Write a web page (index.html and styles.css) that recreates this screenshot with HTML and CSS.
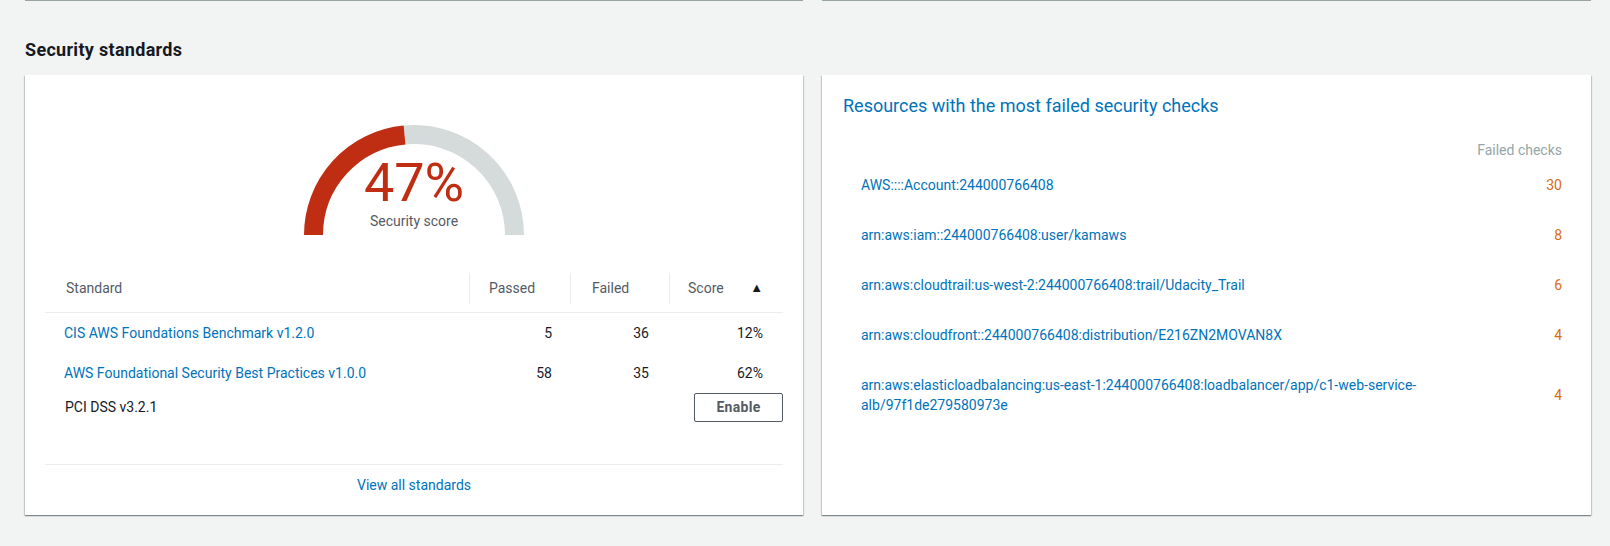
FILE: index.html
```html
<!DOCTYPE html>
<html lang="en">
<head>
<meta charset="utf-8">
<title>Security standards</title>
<link rel="stylesheet" href="styles.css">
</head>
<body>
<div class="page">
  <div class="top-row">
    <div class="top-card"></div>
    <div class="top-card"></div>
  </div>

  <h2 class="section-title">Security standards</h2>

  <div class="cards">
    <div class="card card-standards">
      <div class="gauge">
        <svg class="gauge-svg" width="220" height="110" viewBox="0 0 220 110">
          <path d="M 100.54 9.95 A 100.5 100.5 0 0 1 210.5 110" fill="none" stroke="#d5dbdb" stroke-width="19"/>
          <path d="M 9.5 110 A 100.5 100.5 0 0 1 100.54 9.95" fill="none" stroke="#bf2d13" stroke-width="19"/>
        </svg>
        <div class="gauge-label">
          <div class="gauge-value">47%</div>
          <div class="gauge-caption">Security score</div>
        </div>
      </div>

      <table class="std-table">
        <thead>
          <tr>
            <th class="col-name">Standard</th>
            <th class="col-num sep">Passed</th>
            <th class="col-num sep">Failed</th>
            <th class="col-score sep"><span>Score</span><span class="sort">&#9650;</span></th>
          </tr>
        </thead>
        <tbody>
          <tr class="row-first">
            <td><a href="#" class="link">CIS AWS Foundations Benchmark v1.2.0</a></td>
            <td class="num num-passed">5</td>
            <td class="num">36</td>
            <td class="num">12%</td>
          </tr>
          <tr>
            <td><a href="#" class="link">AWS Foundational Security Best Practices v1.0.0</a></td>
            <td class="num num-passed">58</td>
            <td class="num">35</td>
            <td class="num">62%</td>
          </tr>
          <tr class="row-enable">
            <td class="plain">PCI DSS v3.2.1</td>
            <td></td>
            <td></td>
            <td class="num"><button class="btn">Enable</button></td>
          </tr>
        </tbody>
      </table>

      <div class="card-footer">
        <a href="#" class="link">View all standards</a>
      </div>
    </div>

    <div class="card card-resources">
      <h3 class="res-title">Resources with the most failed security checks</h3>
      <div class="res-head">Failed checks</div>
      <ul class="res-list">
        <li class="res-row"><a href="#" class="link res-name">AWS::::Account:244000766408</a><span class="res-count">30</span></li>
        <li class="res-row"><a href="#" class="link res-name">arn:aws:iam::244000766408:user/kamaws</a><span class="res-count">8</span></li>
        <li class="res-row"><a href="#" class="link res-name">arn:aws:cloudtrail:us-west-2:244000766408:trail/Udacity_Trail</a><span class="res-count">6</span></li>
        <li class="res-row"><a href="#" class="link res-name">arn:aws:cloudfront::244000766408:distribution/E216ZN2MOVAN8X</a><span class="res-count">4</span></li>
        <li class="res-row"><a href="#" class="link res-name">arn:aws:elasticloadbalancing:us-east-1:244000766408:loadbalancer/app/c1-web-service-alb/97f1de279580973e</a><span class="res-count">4</span></li>
      </ul>
    </div>
  </div>
</div>
</body>
</html>
```

FILE: styles.css
```css
* {
  box-sizing: border-box;
}

html, body {
  margin: 0;
  padding: 0;
}

body {
  background: #f2f3f3;
  font-family: Roboto, "Liberation Sans", Arial, sans-serif;
  font-size: 14px;
  color: #16191f;
}

.page {
  width: 1610px;
  height: 546px;
  padding: 0 19px 0 25px;
}

.top-row,
.cards {
  display: grid;
  grid-template-columns: 778fr 769fr;
  column-gap: 19px;
}

.top-card {
  height: 1px;
  background: #9aa4a5;
}

.section-title {
  margin: 38px 0 0;
  font-size: 18px;
  line-height: 22px;
  font-weight: 700;
  letter-spacing: 0.3px;
  color: #16191f;
}

.cards {
  margin-top: 14px;
  align-items: stretch;
}

.card {
  background: #fff;
  height: 440px;
  box-shadow: 0 1px 1px 0 rgba(0, 28, 36, 0.3),
              1px 1px 1px 0 rgba(0, 28, 36, 0.15),
              -1px 1px 1px 0 rgba(0, 28, 36, 0.15);
}

.link {
  color: #0073bb;
  text-decoration: none;
}

/* ---------- Left card ---------- */
.card-standards {
  padding: 50px 20px 0;
  display: flex;
  flex-direction: column;
}

.gauge {
  position: relative;
  align-self: center;
  width: 220px;
  height: 110px;
}

.gauge-svg {
  display: block;
}

.gauge-label {
  position: absolute;
  left: -40px;
  right: -40px;
  top: 31px;
  text-align: center;
}

.gauge-value {
  font-size: 54px;
  line-height: 54px;
  color: #bf2d13;
  font-weight: 400;
}

.gauge-caption {
  margin-top: 3px;
  font-size: 14px;
  line-height: 17px;
  color: #545b64;
}

.std-table {
  margin-top: 28px;
  width: 100%;
  border-collapse: collapse;
  table-layout: fixed;
}

.std-table th {
  position: relative;
  height: 49px;
  padding: 2px 20px 0 21px;
  text-align: left;
  font-weight: 400;
  color: #545b64;
  border-bottom: 1px solid #eaeded;
}

.std-table th.sep::before {
  content: "";
  position: absolute;
  left: 0;
  top: 10px;
  bottom: 8px;
  width: 1px;
  background: #eaeded;
}

.col-name { width: 424px; }
.std-table th.col-num { width: 101px; padding-left: 20px; }
.std-table th.col-num + .col-num { width: 99px; padding-left: 22px; }
.std-table th.col-score {
  padding-left: 19px;
}

.col-score .sort {
  float: right;
  font-size: 13px;
  color: #16191f;
}

.std-table td {
  padding: 11px 20px 11px 19px;
  line-height: 18px;
  vertical-align: middle;
}

.std-table .row-enable td {
  padding-top: 0;
  padding-bottom: 0;
}

.std-table td.plain {
  padding-left: 20px;
}

.std-table td.num {
  text-align: right;
  padding-right: 20px;
}

.std-table td.num-passed {
  padding-right: 18px;
}

.std-table .row-enable td.num {
  padding-right: 0;
}

.btn {
  height: 29px;
  width: 89px;
  border: 1px solid #545b64;
  border-radius: 2px;
  background: #fff;
  color: #545b64;
  font-family: inherit;
  font-size: 14px;
  font-weight: 700;
  letter-spacing: 0.3px;
  padding: 0;
  vertical-align: middle;
}

.card-footer {
  margin-top: 42px;
  border-top: 1px solid #eaeded;
  padding-top: 11px;
  text-align: center;
  line-height: 18px;
}

/* ---------- Right card ---------- */
.card-resources {
  padding: 20px 29px 0 21px;
}

.res-title {
  margin: 0;
  font-size: 18px;
  line-height: 22px;
  font-weight: 400;
  color: #0073bb;
}

.res-head {
  margin-top: 23px;
  text-align: right;
  line-height: 20px;
  color: #95a5a6;
}

.res-list {
  list-style: none;
  margin: 0;
  padding: 0 0 0 18px;
}

.res-row {
  display: flex;
  justify-content: space-between;
  align-items: center;
  padding: 15px 0;
  line-height: 20px;
}

.res-name {
  max-width: 570px;
}

.res-count {
  color: #dd6b10;
}
```
